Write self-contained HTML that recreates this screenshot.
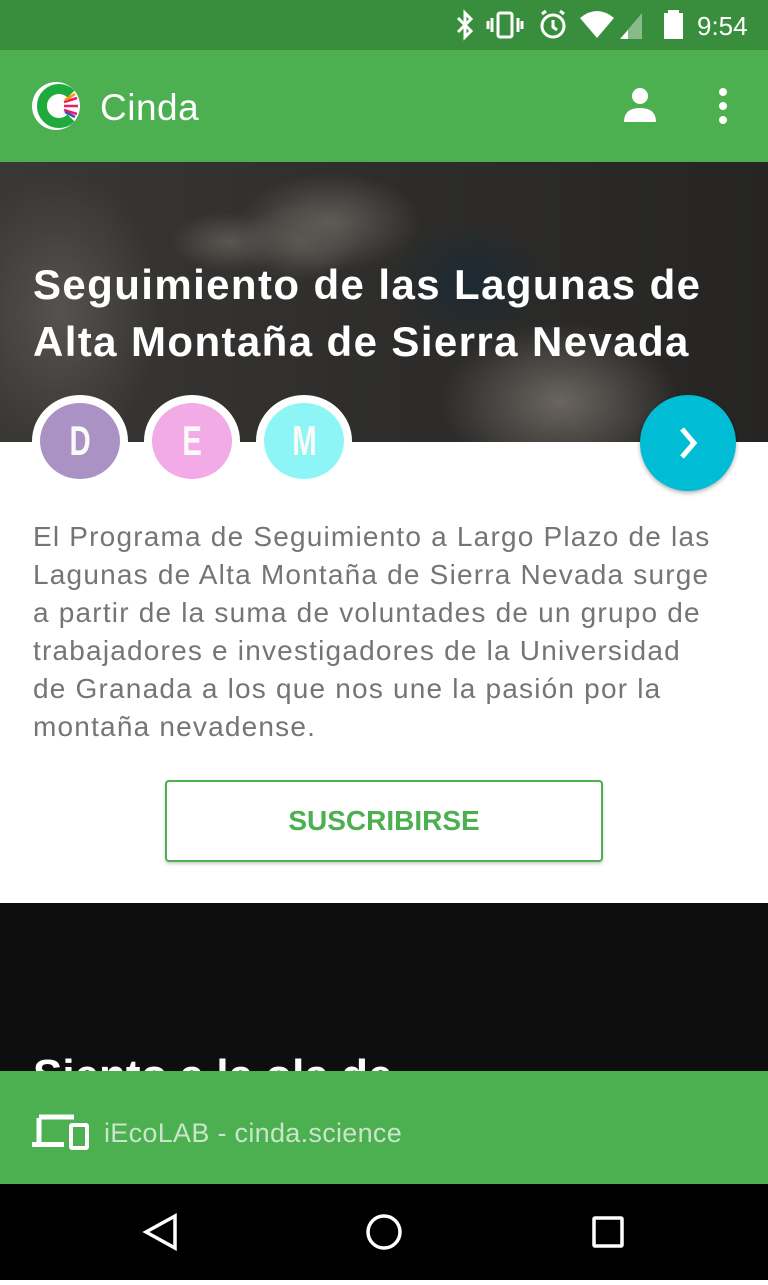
<!DOCTYPE html>
<html><head><meta charset="utf-8"><style>
*{margin:0;padding:0;box-sizing:border-box}
body{width:768px;height:1280px;overflow:hidden;position:relative;font-family:"Liberation Sans",Roboto,sans-serif;background:#fff}
.sb{position:absolute;top:0;left:0;width:768px;height:50px;background:#388e3c;color:#fff}
.ab{position:absolute;top:50px;left:0;width:768px;height:112px;background:#4caf50}
.hero{position:absolute;top:162px;left:0;width:768px;height:280px;overflow:hidden;
background:
radial-gradient(ellipse 90px 50px at 330px 60px,#5f5b57,transparent),
radial-gradient(ellipse 60px 40px at 300px 80px,#57534f,transparent),
radial-gradient(ellipse 120px 80px at 560px 240px,#6a6560,transparent),
radial-gradient(ellipse 80px 60px at 470px 120px,#1c2a33,transparent),
radial-gradient(ellipse 100px 140px at 60px 150px,#55524f,transparent),
radial-gradient(ellipse 60px 30px at 230px 80px,#5a5652,transparent),
linear-gradient(90deg,#3a3835,#2e2d2b 50%,#262524);}
.title{position:absolute;left:33px;top:256px;color:#fff;font-weight:bold;font-size:42px;line-height:57px;letter-spacing:1.4px;white-space:nowrap}
.av{position:absolute;top:395px;width:96px;height:92px;border-radius:50%;background:#fff}
.av div{position:absolute;left:8px;top:8px;width:80px;height:76px;border-radius:50%;color:#fafafa;font-size:42px;font-weight:bold;text-align:center;line-height:76px}
.av span{display:inline-block;transform:scaleX(0.7)}
.fab{position:absolute;left:640px;top:395px;width:96px;height:96px;border-radius:50%;background:#00bcd4;box-shadow:0 2px 4px rgba(0,0,0,.3)}
.body{position:absolute;left:33px;top:518px;width:720px;color:#757575;font-size:28px;line-height:38px;letter-spacing:1.2px}
.btn{position:absolute;left:165px;top:780px;width:438px;height:82px;border:2px solid #4caf50;border-radius:4px;color:#4caf50;font-size:28px;font-weight:bold;text-align:center;line-height:78px;box-shadow:0 2px 3px rgba(0,0,0,.2)}
.dark{position:absolute;top:903px;left:0;width:768px;height:170px;background:#0e0e0e;overflow:hidden}
.foot{position:absolute;top:1071px;left:0;width:768px;height:113px;background:#4caf50}
.nav{position:absolute;top:1184px;left:0;width:768px;height:96px;background:#000}
</style></head><body>
<div class="sb">
<svg width="768" height="50" style="position:absolute;left:0;top:0">
<g fill="none" stroke="#fff" stroke-width="3">
<path d="M458 18l13 13-6 6V13l6 6-13 13"/>
<rect x="498" y="13" width="14" height="24" rx="2"/>
<path d="M492 18v14M518 18v14M488 21v8M522 21v8"/>
<circle cx="553" cy="26" r="11"/><path d="M553 20v7l4 3M542 14l4-3M564 14l-4-3"/>
</g>
<path d="M580 18q17-14 34 0l-17 20z" fill="#fff"/>
<path d="M620 39l22-26v26z" fill="#fff" opacity=".4"/><path d="M620 39l8-9v9z" fill="#fff"/>
<rect x="664" y="13" width="19" height="26" fill="#fff"/><rect x="668" y="10" width="11" height="4" fill="#fff"/>
<text x="697" y="35" fill="#fff" font-size="26" font-family="Liberation Sans">9:54</text>
</svg></div>
<div class="ab">
<svg width="768" height="112" style="position:absolute;left:0;top:0">
<circle cx="56" cy="56" r="24" fill="#fff"/>
<path d="M71 44A17 17 0 1 0 71 68" fill="none" stroke="#1faa3c" stroke-width="10"/>
<path d="M64 52l13-4M64 56h14M64 60l13 4" stroke="#e91e63" stroke-width="2.5"/>
<path d="M65 50l10-6" stroke="#ff9800" stroke-width="2.5"/><path d="M65 62l10 5" stroke="#3f51b5" stroke-width="2.5"/>
<text x="100" y="70" fill="#fff" font-size="37" font-family="Liberation Sans" letter-spacing="0.5">Cinda</text>
<circle cx="640" cy="46" r="8" fill="#fff"/><path d="M624 72q0-14 16-14t16 14z" fill="#fff"/>
<circle cx="723" cy="42" r="4" fill="#fff"/><circle cx="723" cy="56" r="4" fill="#fff"/><circle cx="723" cy="70" r="4" fill="#fff"/>
</svg></div>
<div class="hero"></div>
<div class="title">Seguimiento de las Lagunas de<br>Alta Montaña de Sierra Nevada</div>
<div class="av" style="left:32px"><div style="background:#ab92c4"><span>D</span></div></div>
<div class="av" style="left:144px"><div style="background:#f3abe8"><span>E</span></div></div>
<div class="av" style="left:256px"><div style="background:#8ef5f7"><span>M</span></div></div>
<div class="fab"><svg width="96" height="96"><path d="M42 34l12 14-12 14" fill="none" stroke="#fff" stroke-width="5"/></svg></div>
<div class="body">El Programa de Seguimiento a Largo Plazo de las<br>Lagunas de Alta Montaña de Sierra Nevada surge<br>a partir de la suma de voluntades de un grupo de<br>trabajadores e investigadores de la Universidad<br>de Granada a los que nos une la pasión por la<br>montaña nevadense.</div>
<div class="btn">SUSCRIBIRSE</div>
<div class="dark"><div style="position:absolute;left:33px;top:148px;color:#fff;font-size:44px;font-weight:bold">Siento a la ola de</div></div>
<div class="foot">
<svg width="768" height="113" style="position:absolute;left:0;top:0">
<path d="M39 47v27M39 46h35" stroke="#fff" stroke-width="5" fill="none"/>
<rect x="32" y="71" width="32" height="5" fill="#fff"/>
<rect x="71" y="54" width="16" height="23" rx="1" fill="none" stroke="#fff" stroke-width="4"/>
<text x="104" y="71" fill="#c8e6c9" font-size="27" font-family="Liberation Sans" letter-spacing="0.3">iEcoLAB - cinda.science</text>
</svg></div>
<div class="nav"><svg width="768" height="96">
<path d="M175 32L146 48l29 16z" fill="none" stroke="#fff" stroke-width="3.5"/>
<circle cx="384" cy="48" r="16" fill="none" stroke="#fff" stroke-width="3.5"/>
<rect x="594" y="34" width="28" height="28" rx="1" fill="none" stroke="#fff" stroke-width="3.5"/>
</svg></div>
</body></html>
